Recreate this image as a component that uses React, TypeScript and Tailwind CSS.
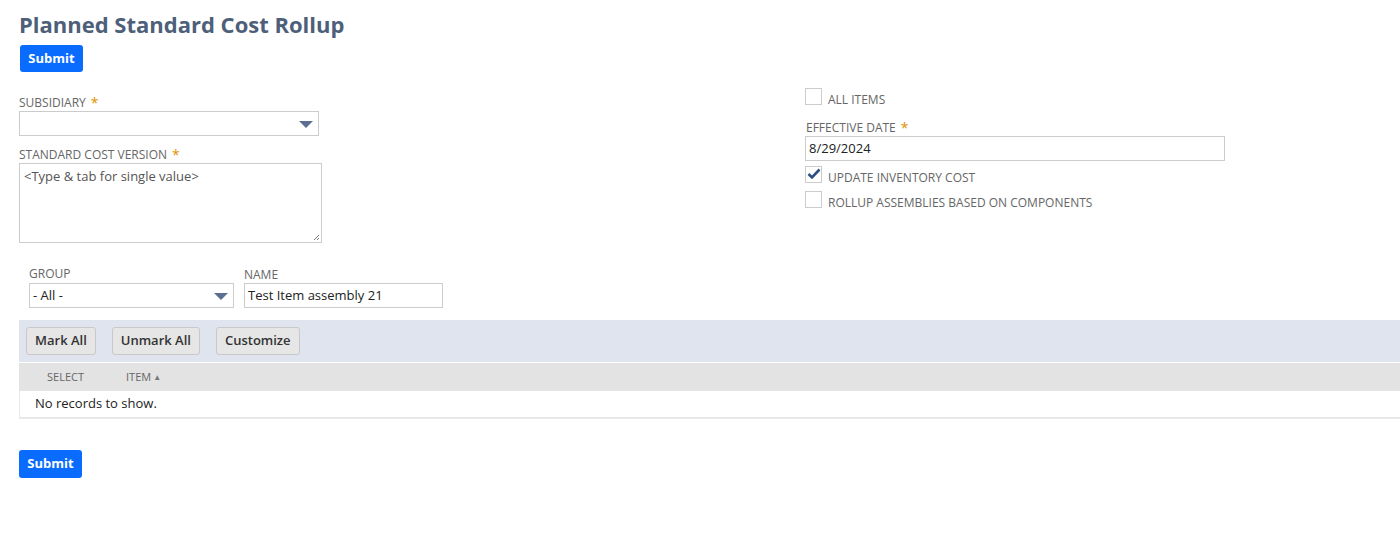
import React from "react";

const Star = () => <span className="text-[#e09200] ml-[5px] text-[14px] leading-none">*</span>;

const Arrow = () => (
  <svg width="14" height="8" viewBox="0 0 14 8" className="absolute right-[5px] top-[9px]">
    <path d="M0 0 L14 0 L7 7 Z" fill="#5a6f92" />
  </svg>
);

const Check = ({ checked }: { checked?: boolean }) => (
  <div className="relative w-[17px] h-[17px] border border-[#cccccc] bg-white shrink-0">
    {checked && (
      <svg width="14" height="12" viewBox="0 0 14 12" className="absolute left-[1px] top-[1px]">
        <path d="M1.5 6 L5 9.5 L12.5 1.5" stroke="#2c4f85" strokeWidth="2.6" fill="none" />
      </svg>
    )}
  </div>
);

const CheckRow = ({ checked, label, className }: { checked?: boolean; label: string; className?: string }) => (
  <div className={"flex items-start gap-[6px] " + (className ?? "")}>
    <Check checked={checked} />
    <span className="text-[12px] leading-[17px] pt-[3px] text-[#666666]">{label}</span>
  </div>
);

const Label = ({ children, star }: { children: React.ReactNode; star?: boolean }) => (
  <div className="text-[12px] leading-[14px] text-[#666666] uppercase flex items-start">
    <span>{children}</span>
    {star && <Star />}
  </div>
);

export default function App() {
  return (
    <div className="bg-white w-[1400px] h-[555px] overflow-hidden font-['Open_Sans',sans-serif] relative">
      <div className="pl-[19px] pt-[9px]">
        <h1 className="text-[22px] leading-[30px] font-bold text-[#4d5f79]">Planned Standard Cost Rollup</h1>
        <button className="mt-[6px] ml-[1px] h-[27px] w-[63px] rounded-[3px] bg-[#0a6cff] text-white text-[13px] font-bold">Submit</button>
      </div>

      <div className="flex mt-[15px]">
        <div className="w-[786px] pl-[19px]">
          <div className="pt-[9px]">
            <Label star>Subsidiary</Label>
            <div className="relative mt-[1px] w-[300px] h-[25px] border border-[#cccccc] bg-white">
              <Arrow />
            </div>
          </div>
          <div className="mt-[12px]">
            <Label star>Standard Cost Version</Label>
            <div className="relative mt-[1px] w-[303px] h-[80px] border border-[#cccccc] bg-white px-[4px] pt-[3px] text-[13px] text-[#555555]">
              &lt;Type &amp; tab for single value&gt;
              <svg width="7" height="7" viewBox="0 0 7 7" className="absolute right-[1px] bottom-[1px]">
                <path d="M6 1 L1 6 M6 4 L4 6" stroke="#777" strokeWidth="1" />
              </svg>
            </div>
          </div>
          <div className="flex mt-[24px] pl-[10px] gap-[10px]">
            <div>
              <Label>Group</Label>
              <div className="relative mt-[2px] w-[205px] h-[25px] border border-[#cccccc] bg-white text-[13px] text-[#222] pl-[3px] leading-[23px]">
                - All -
                <Arrow />
              </div>
            </div>
            <div>
              <div className="pt-[1px]"><Label>Name</Label></div>
              <div className="mt-[1px] w-[199px] h-[25px] border border-[#cccccc] bg-white text-[13px] text-[#222] pl-[3px] leading-[23px]">
                Test Item assembly 21
              </div>
            </div>
          </div>
        </div>

        <div className="pl-[19px] mt-[1px]">
          <CheckRow label="ALL ITEMS" />
          <div className="mt-[13px] ml-[1px]">
            <Label star>Effective Date</Label>
          </div>
          <div className="mt-[1px] w-[420px] h-[25px] border border-[#cccccc] bg-white text-[13px] text-[#222] pl-[3px] leading-[23px]">
            8/29/2024
          </div>
          <CheckRow checked label="UPDATE INVENTORY COST" className="mt-[5px]" />
          <CheckRow label="ROLLUP ASSEMBLIES BASED ON COMPONENTS" className="mt-[5px]" />
        </div>
      </div>

      <div className="ml-[19px] mt-[12px]">
        <div className="h-[42px] bg-[#dfe4ee] flex items-center gap-[16px] pl-[7px]">
          <button className="h-[28px] px-[8px] rounded-[3px] border border-[#c8c8c8] bg-[#e6e6e6] text-[13px] font-semibold text-[#333]">Mark All</button>
          <button className="h-[28px] px-[8px] rounded-[3px] border border-[#c8c8c8] bg-[#e6e6e6] text-[13px] font-semibold text-[#333]">Unmark All</button>
          <button className="h-[28px] px-[8px] rounded-[3px] border border-[#c8c8c8] bg-[#e6e6e6] text-[13px] font-semibold text-[#333]">Customize</button>
        </div>
        <div className="h-[28px] mt-[1px] bg-[#e3e3e3] flex items-center text-[11px] text-[#666666]">
          <span className="ml-[28px]">SELECT</span>
          <span className="ml-[42px] flex items-center">ITEM<span className="text-[8px] ml-[2px] text-[#777]">▲</span></span>
        </div>
        <div className="h-[28px] border-l border-b-[2px] border-[#e8e8e8] flex items-center text-[13px] text-[#222] pl-[15px]">
          No records to show.
        </div>
      </div>

      <div className="ml-[19px] mt-[31px]">
        <button className="h-[28px] w-[63px] rounded-[3px] bg-[#0a6cff] text-white text-[13px] font-bold">Submit</button>
      </div>
    </div>
  );
}
